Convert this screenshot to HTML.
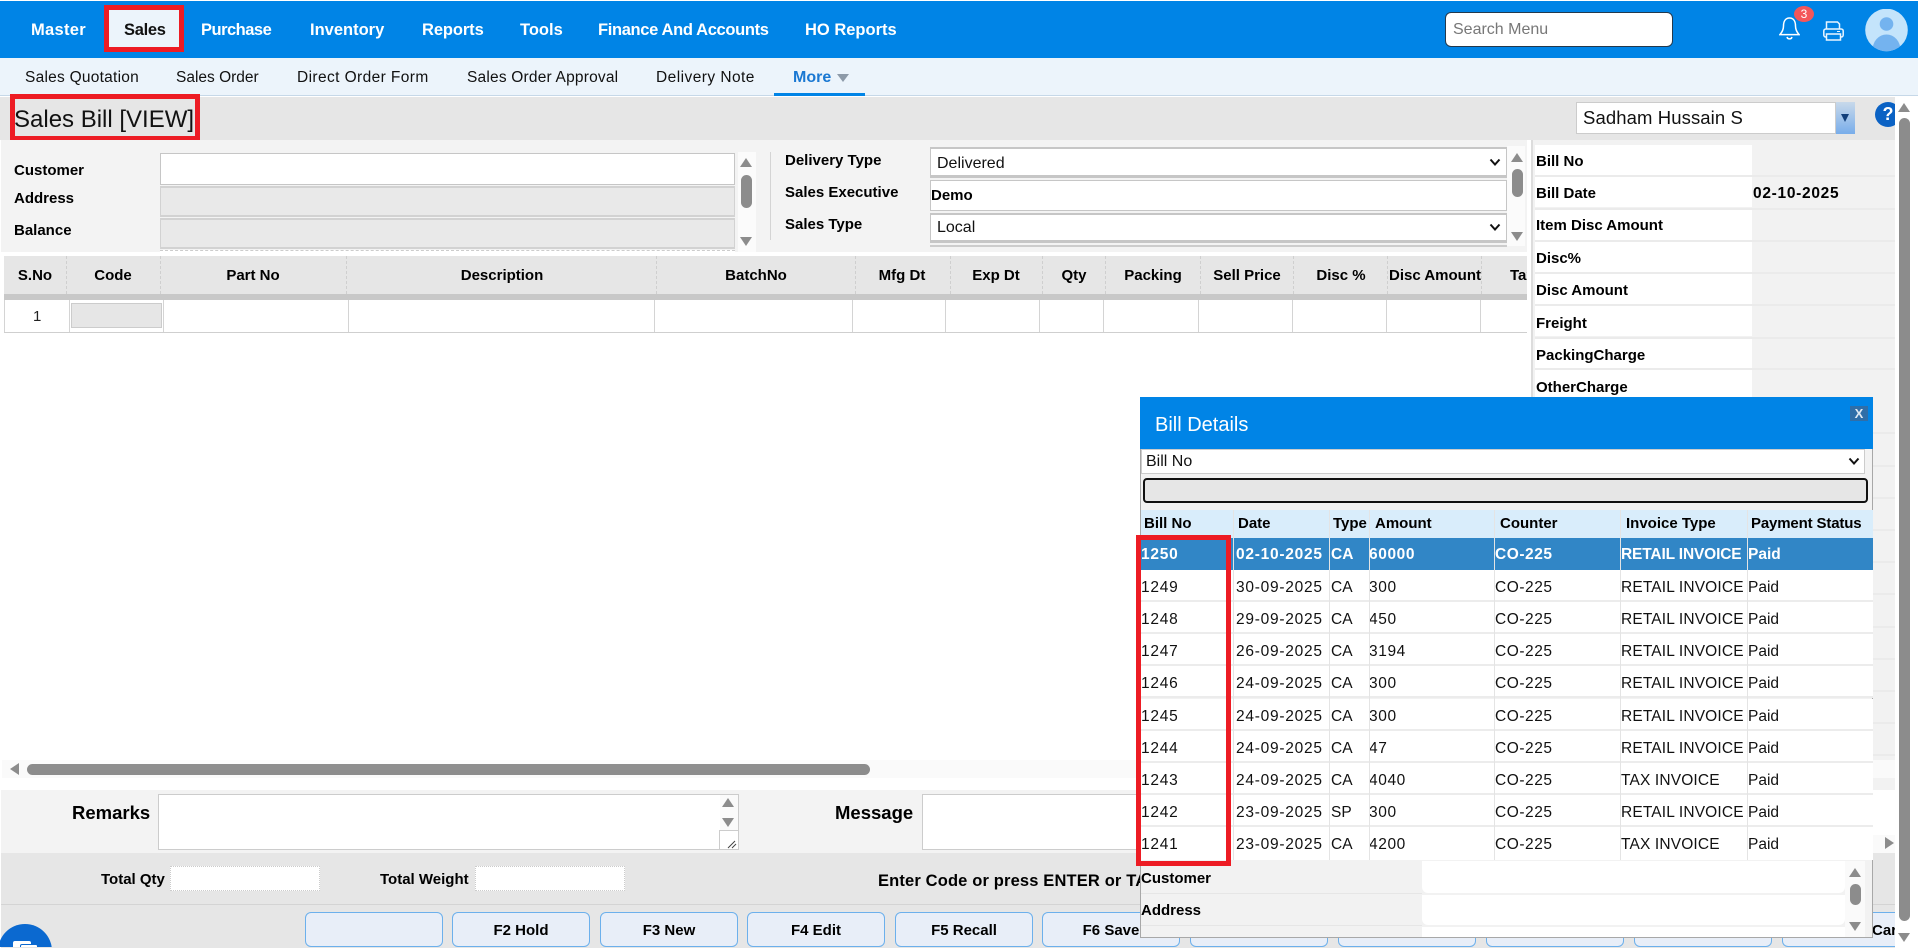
<!DOCTYPE html>
<html><head><meta charset="utf-8"><title>Sales Bill</title>
<style>
html,body{margin:0;padding:0;background:#fff;width:1918px;height:950px;overflow:hidden}
body{position:relative;font-family:"Liberation Sans",Arial,sans-serif;color:#000}
div,span,svg{position:absolute;box-sizing:border-box}
.t{white-space:nowrap;line-height:20px;height:20px}
.b{font-weight:bold;font-size:15px}
.c{text-align:center;transform:translateX(-50%)}
.n{font-weight:bold;font-size:16.5px;color:#fff;top:20px}
.s{font-size:15.5px;top:68px;color:#111}
.u{width:0;height:0;border-left:6.5px solid transparent;border-right:6.5px solid transparent;border-bottom:9px solid #8c8c8c}
.d{width:0;height:0;border-left:6.5px solid transparent;border-right:6.5px solid transparent;border-top:9px solid #8c8c8c}
.th{background:#8c8c8c;border-radius:6px}
.sep{width:0;border-left:1px dashed #cfcfcf;top:256px;height:38px}
.bs{width:1px;background:#d4d4d4;top:300px;height:32px}
.inp{background:#fff;border:1px solid #c6c6c6}
.sel{background:#fff;border:1px solid #c6c6c6;border-top-width:2px;border-bottom-width:2px}
.gr{background:#e9e9e9;border:1px solid #d2d2d2;border-top-width:2px;border-bottom-width:2px}
.rl{left:1535px;width:217px;height:30px;background:#fff}
.rline{left:1535px;width:360px;height:2px;background:#ebebeb}
.btn{top:912px;height:35px;width:138px;background:#e8eef8;border:1px solid #6cb0ec;border-radius:6px;font-weight:bold;font-size:15px;line-height:35px;text-align:center;white-space:nowrap}
.r{left:1141px;width:732px;height:32px;display:block;border-bottom:2px solid #ececec;background:#fff;font-size:15.5px;color:#111}
.r span{top:8px;line-height:20px;white-space:nowrap}
.sl span{top:7px}
.v{width:1px;top:510px;height:350px;background:#e4e4e4}
.a{left:0;letter-spacing:.75px}.x1{left:95px;letter-spacing:.75px}.x2{left:190px}.x3{left:228px;letter-spacing:.6px}.x4{left:354px;letter-spacing:.55px}.x5{left:480px;letter-spacing:.15px}.x6{left:607px}
.sl .x5{letter-spacing:-.15px}
</style></head><body>

<!-- top nav -->
<div style="left:0;top:1px;width:1918px;height:57px;background:#0084e6"></div>
<div style="left:0;top:58px;width:1918px;height:37px;background:#ecf4fb"></div>
<div style="left:0;top:95px;width:1918px;height:1px;background:#c6d8e8"></div>
<div style="left:104px;top:5px;width:80px;height:47px;border:5px solid #ed1c24;background:#ecf4fb"></div>
<span class="t n" style="left:31px;letter-spacing:.3px">Master</span>
<span class="t n" style="left:124px;color:#111;letter-spacing:-.3px">Sales</span>
<span class="t n" style="left:201px;letter-spacing:-.5px">Purchase</span>
<span class="t n" style="left:310px">Inventory</span>
<span class="t n" style="left:422px;letter-spacing:-.1px">Reports</span>
<span class="t n" style="left:520px">Tools</span>
<span class="t n" style="left:598px;letter-spacing:-.35px">Finance And Accounts</span>
<span class="t n" style="left:805px">HO Reports</span>

<span class="t s" style="left:25px;letter-spacing:.25px">Sales Quotation</span>
<span class="t s" style="left:176px">Sales Order</span>
<span class="t s" style="left:297px;letter-spacing:.4px">Direct Order Form</span>
<span class="t s" style="left:467px;letter-spacing:.2px">Sales Order Approval</span>
<span class="t s" style="left:656px;letter-spacing:.45px">Delivery Note</span>
<span class="t" style="left:793px;top:68px;font-size:16px;font-weight:bold;color:#1a78d2">More</span>
<div style="left:837px;top:74px;width:0;height:0;border-left:6.5px solid transparent;border-right:6.5px solid transparent;border-top:8px solid #8d9aa8"></div>
<div style="left:774px;top:93px;width:91px;height:3px;background:#0084e6"></div>

<div style="left:1445px;top:12px;width:228px;height:35px;background:#fff;border:1px solid #23394d;border-radius:6px"></div>
<span class="t" style="left:1453px;top:20px;font-size:16px;color:#777">Search Menu</span>

<svg style="left:1779px;top:17px" width="21" height="24" viewBox="0 0 21 24" fill="none" stroke="#fff" stroke-width="1.5"><path d="M10.5 1C6 1 4.5 5 4.5 9c0 4-1.5 6.3-3.6 8.6h19.2C18 15.3 16.5 13 16.5 9c0-4-1.5-8-6-8z"/><path d="M8 18a2.6 2.6 0 0 0 5 0" transform="translate(0 2)"/></svg>
<div style="left:1794px;top:6px;width:20px;height:16px;background:#f4565a;border-radius:50%"></div>
<span class="t" style="left:1794px;top:4px;width:20px;text-align:center;font-size:12px;color:#fff">3</span>
<svg style="left:1823px;top:21px" width="21" height="20" viewBox="0 0 21 20" fill="none" stroke="#eaf5ff" stroke-width="1.5"><path d="M3.5 8V1h11l2 2v5"/><rect x=".8" y="8" width="19.4" height="8" rx="2"/><rect x="3.5" y="13" width="14" height="6" fill="#0084e6"/><path d="M14 10.5h3" stroke-width="1"/></svg>
<svg style="left:1865px;top:9px" width="43" height="43" viewBox="0 0 43 43"><circle cx="21.5" cy="21" r="21.3" fill="#c4e4fb"/><circle cx="21.5" cy="15" r="6.8" fill="#74b3ef"/><clipPath id="cl"><circle cx="21.5" cy="21" r="21.3"/></clipPath><ellipse cx="21.5" cy="41" rx="14" ry="15.5" fill="#74b3ef" clip-path="url(#cl)"/></svg>

<!-- title bar -->
<div style="left:0;top:97px;width:1895px;height:43px;background:#e6e6e6"></div>
<div style="left:10px;top:94px;width:190px;height:47px;border:5px solid #ed1c24"></div>
<span class="t" style="left:14px;top:105px;height:30px;line-height:30px;font-size:24px;color:#111">Sales Bill [VIEW]</span>
<div style="left:1576px;top:102px;width:260px;height:32px;background:#fff;border:1px solid #ccc"></div>
<span class="t" style="left:1583px;top:106px;height:24px;line-height:24px;font-size:18.5px;color:#111;letter-spacing:.1px">Sadham Hussain S</span>
<div style="left:1836px;top:102px;width:19px;height:32px;background:linear-gradient(#c8d9ea,#78adea)"></div>
<div style="left:1841px;top:114px;width:0;height:0;border-left:4.5px solid transparent;border-right:4.5px solid transparent;border-top:8px solid #123f7a"></div>
<div style="left:1875px;top:102px;width:20px;height:25px;overflow:hidden"><div style="left:0;top:0;width:26px;height:25px;border-radius:50%;background:#0b62c4;color:#fff;font-weight:bold;font-size:18px;line-height:25px;text-align:center">?</div></div>

<!-- form area -->
<div style="left:1px;top:140px;width:1526px;height:112px;background:#f3f3f3"></div>
<span class="t b" style="left:14px;top:161px">Customer</span>
<span class="t b" style="left:14px;top:189px">Address</span>
<span class="t b" style="left:14px;top:221px">Balance</span>
<div class="inp" style="left:160px;top:153px;width:575px;height:32px"></div>
<div class="gr" style="left:160px;top:186px;width:575px;height:31px"></div>
<div class="gr" style="left:160px;top:218px;width:575px;height:31px"></div>
<div style="left:160px;top:250px;width:575px;height:2px;background:#fff;border-top:1px dashed #ccc"></div>
<div style="left:738px;top:152px;width:18px;height:100px;background:#fbfbfb"></div>
<div class="u" style="left:740px;top:158px"></div>
<div class="th" style="left:741px;top:175px;width:11px;height:33px"></div>
<div class="d" style="left:740px;top:237px"></div>
<div style="left:770px;top:152px;width:1px;height:88px;background:#d4d4d4"></div>

<span class="t b" style="left:785px;top:151px">Delivery Type</span>
<span class="t b" style="left:785px;top:183px">Sales Executive</span>
<span class="t b" style="left:785px;top:215px">Sales Type</span>
<div class="sel" style="left:930px;top:147px;width:577px;height:31px;border-bottom-width:3px"></div>
<span class="t" style="left:937px;top:154px;font-size:16px;color:#111">Delivered</span>
<svg style="left:1489px;top:158px" width="12" height="9" viewBox="0 0 12 9" fill="none" stroke="#111" stroke-width="2"><path d="M1.5 1.5 6 6.5l4.500-5"/></svg>
<div class="inp" style="left:930px;top:180px;width:577px;height:31px"></div>
<span class="t b" style="left:931px;top:186px">Demo</span>
<div class="sel" style="left:930px;top:213px;width:577px;height:30px;border-bottom-width:3px"></div>
<span class="t" style="left:937px;top:218px;font-size:16px;color:#111">Local</span>
<svg style="left:1489px;top:223px" width="12" height="9" viewBox="0 0 12 9" fill="none" stroke="#111" stroke-width="2"><path d="M1.5 1.5 6 6.5l4.500-5"/></svg>
<div style="left:930px;top:245px;width:577px;height:2px;background:#ccc"></div>
<div style="left:1507px;top:146px;width:18px;height:100px;background:#fbfbfb"></div>
<div class="u" style="left:1511px;top:153px"></div>
<div class="th" style="left:1512px;top:169px;width:11px;height:28px"></div>
<div class="d" style="left:1511px;top:232px"></div>

<!-- right panel -->
<div style="left:1531px;top:140px;width:364px;height:650px;background:#f2f2f2;border-left:2px solid #dcdcdc"></div>
<div class="rl" style="top:145px"></div><div class="rl" style="top:177px"></div><div class="rl" style="top:209px;height:31px"></div><div class="rl" style="top:242px"></div><div class="rl" style="top:274px"></div><div class="rl" style="top:306px"></div><div class="rl" style="top:338px"></div><div class="rl" style="top:370px;height:28px"></div>
<div class="rline" style="top:175px"></div><div class="rline" style="top:208px"></div><div class="rline" style="top:240px"></div><div class="rline" style="top:272px"></div><div class="rline" style="top:304px"></div><div class="rline" style="top:337px"></div><div class="rline" style="top:368px"></div>
<div class="rline" style="top:432px"></div><div class="rline" style="top:465px"></div><div class="rline" style="top:497px"></div><div class="rline" style="top:529px"></div><div class="rline" style="top:561px"></div><div class="rline" style="top:593px"></div><div class="rline" style="top:626px"></div><div class="rline" style="top:658px"></div><div class="rline" style="top:690px"></div><div class="rline" style="top:722px"></div><div class="rline" style="top:754px"></div>
<span class="t b" style="left:1536px;top:152px">Bill No</span>
<span class="t b" style="left:1536px;top:184px">Bill Date</span>
<span class="t b" style="left:1753px;top:184px;letter-spacing:.7px;font-size:15.500px">02-10-2025</span>
<span class="t b" style="left:1536px;top:216px">Item Disc Amount</span>
<span class="t b" style="left:1536px;top:249px">Disc%</span>
<span class="t b" style="left:1536px;top:281px">Disc Amount</span>
<span class="t b" style="left:1536px;top:314px">Freight</span>
<span class="t b" style="left:1536px;top:346px">PackingCharge</span>
<span class="t b" style="left:1536px;top:378px">OtherCharge</span>

<!-- main scrollbar -->
<div class="u" style="left:1898px;top:103px"></div>
<div class="th" style="left:1899px;top:118px;width:11px;height:803px"></div>
<div class="d" style="left:1898px;top:933px"></div>

<!-- grid -->
<div style="left:4px;top:256px;width:1523px;height:38px;background:#e6e6e6"></div>
<div style="left:4px;top:294px;width:1523px;height:6px;background:#c8c8c8"></div>
<div class="sep" style="left:66px"></div><div class="sep" style="left:160px"></div><div class="sep" style="left:346px"></div><div class="sep" style="left:656px"></div><div class="sep" style="left:855px"></div><div class="sep" style="left:950px"></div><div class="sep" style="left:1042px"></div><div class="sep" style="left:1105px"></div><div class="sep" style="left:1200px"></div><div class="sep" style="left:1293px"></div><div class="sep" style="left:1387px"></div><div class="sep" style="left:1481px"></div>
<span class="t b c" style="left:35px;top:266px">S.No</span>
<span class="t b c" style="left:113px;top:266px">Code</span>
<span class="t b c" style="left:253px;top:266px">Part No</span>
<span class="t b c" style="left:502px;top:266px">Description</span>
<span class="t b c" style="left:756px;top:266px">BatchNo</span>
<span class="t b c" style="left:902px;top:266px">Mfg Dt</span>
<span class="t b c" style="left:996px;top:266px">Exp Dt</span>
<span class="t b c" style="left:1074px;top:266px">Qty</span>
<span class="t b c" style="left:1153px;top:266px">Packing</span>
<span class="t b c" style="left:1247px;top:266px">Sell Price</span>
<span class="t b c" style="left:1341px;top:266px">Disc %</span>
<span class="t b c" style="left:1435px;top:266px">Disc Amount</span>
<div style="left:1510px;top:266px;width:17px;height:20px;overflow:hidden"><span class="t b" style="left:0;top:0">Tax</span></div>
<div style="left:4px;top:332px;width:1523px;height:1px;background:#cfcfcf"></div>
<div class="bs" style="left:4px"></div><div class="bs" style="left:69px"></div><div class="bs" style="left:163px"></div><div class="bs" style="left:348px"></div><div class="bs" style="left:654px"></div><div class="bs" style="left:852px"></div><div class="bs" style="left:945px"></div><div class="bs" style="left:1039px"></div><div class="bs" style="left:1103px"></div><div class="bs" style="left:1198px"></div><div class="bs" style="left:1292px"></div><div class="bs" style="left:1386px"></div><div class="bs" style="left:1480px"></div>
<span class="t" style="left:33px;top:307px;font-size:15px;color:#222">1</span>
<div style="left:71px;top:303px;width:91px;height:25px;background:#e6e6e6;border:1px solid #ccc"></div>

<!-- h scrollbar -->
<div style="left:2px;top:760px;width:1893px;height:18px;background:#fafafa"></div>
<div style="left:10px;top:763px;width:0;height:0;border-top:6.5px solid transparent;border-bottom:6.5px solid transparent;border-right:9px solid #8c8c8c"></div>
<div class="th" style="left:27px;top:764px;width:843px;height:11px"></div>
<div style="left:1873px;top:835px;width:22px;height:18px;background:#fafafa"></div>
<div style="left:1885px;top:837px;width:0;height:0;border-top:6.5px solid transparent;border-bottom:6.5px solid transparent;border-left:9px solid #8c8c8c"></div>

<!-- bottom -->
<div style="left:1px;top:790px;width:1894px;height:63px;background:#f3f3f3"></div>
<div style="left:1873px;top:835px;width:22px;height:18px;background:#fafafa"></div>
<div style="left:1885px;top:837px;width:0;height:0;border-top:6.5px solid transparent;border-bottom:6.5px solid transparent;border-left:9px solid #8c8c8c"></div>
<div style="left:1873px;top:790px;width:22px;height:45px;background:#fff"></div>
<div style="left:1px;top:853px;width:1894px;height:95px;background:#e6e6e6"></div>
<div style="left:1px;top:904px;width:1894px;height:1px;background:#d4d4d4"></div>
<span class="t" style="left:72px;top:803px;font-size:18.5px;font-weight:bold">Remarks</span>
<div style="left:158px;top:794px;width:581px;height:56px;background:#fff;border:1px solid #ccc"></div>
<div style="left:720px;top:795px;width:18px;height:36px;background:#fafafa"></div>
<div class="u" style="left:722px;top:798px;border-left-width:6px;border-right-width:6px"></div>
<div class="d" style="left:722px;top:818px;border-left-width:6px;border-right-width:6px"></div>
<div style="left:719px;top:830px;width:20px;height:20px;background:#fff;border:1px solid #ccc"></div>
<svg style="left:727px;top:839px" width="10" height="10" viewBox="0 0 10 10" stroke="#444" stroke-width="1" fill="none"><path d="M1 9 8 2M5 9 9 5"/></svg>
<span class="t" style="left:835px;top:803px;font-size:18.5px;font-weight:bold">Message</span>
<div style="left:922px;top:794px;width:300px;height:56px;background:#fff;border:1px solid #ccc"></div>
<span class="t b" style="left:101px;top:870px">Total Qty</span>
<div style="left:170px;top:866px;width:150px;height:25px;background:#fff;border:1px dotted #ccc"></div>
<span class="t b" style="left:380px;top:870px">Total Weight</span>
<div style="left:475px;top:866px;width:150px;height:25px;background:#fff;border:1px dotted #ccc"></div>
<span class="t" style="left:878px;top:871px;font-size:16.500px;font-weight:bold;letter-spacing:.15px">Enter Code or press ENTER or TAB</span>

<div class="btn" style="left:305px"></div>
<div class="btn" style="left:452px">F2 Hold</div>
<div class="btn" style="left:600px">F3 New</div>
<div class="btn" style="left:747px">F4 Edit</div>
<div class="btn" style="left:895px">F5 Recall</div>
<div class="btn" style="left:1042px">F6 Save</div>
<div class="btn" style="left:1190px"></div>
<div class="btn" style="left:1338px"></div>
<div class="btn" style="left:1486px"></div>
<div class="btn" style="left:1634px"></div>
<div class="btn" style="left:1782px;width:113px;border-right:0;border-radius:6px 0 0 6px;overflow:hidden"><span class="t" style="left:43px;top:8px">Pay</span><span class="t" style="left:89px;top:8px">Card</span></div>

<!-- chat bubble -->
<div style="left:0;top:900px;width:60px;height:47px;overflow:hidden"><div style="left:-2px;top:24px;width:54px;height:54px;border-radius:50%;background:#0b69d0"></div><div style="left:13px;top:41px;width:18px;height:10px;background:#fff;border-radius:2px"></div><div style="left:20px;top:44px;width:18px;height:8px;background:#fff;border:1px solid #0b69d0;border-radius:2px"></div></div>

<!-- popup -->
<div style="left:1140px;top:397px;width:733px;height:541px;background:#f2f2f2;border:1px solid #a8a8a8;border-top:0"></div>
<div style="left:1140px;top:397px;width:733px;height:52px;background:#0084e6"></div>
<span class="t" style="left:1155px;top:413px;height:24px;line-height:24px;font-size:20px;color:#fff">Bill Details</span>
<div style="left:1850px;top:406px;width:18px;height:15px;background:#2f6ea8;color:#dfe9f3;font-size:13px;font-weight:bold;line-height:15px;text-align:center">X</div>
<div style="left:1141px;top:449px;width:724px;height:25px;background:#fff;border:1px solid #ccc"></div>
<span class="t" style="left:1146px;top:452px;font-size:16px;color:#111">Bill No</span>
<svg style="left:1848px;top:457px" width="12" height="9" viewBox="0 0 12 9" fill="none" stroke="#111" stroke-width="2"><path d="M1.500 1.500 6 6.500l4.500-5"/></svg>
<div style="left:1143px;top:478px;width:725px;height:25px;background:#e6e6e6;border:2px solid #111;border-radius:4px"></div>
<div style="left:1141px;top:510px;width:732px;height:28px;background:#d9edfb"></div>
<span class="t b" style="left:1144px;top:514px">Bill No</span>
<span class="t b" style="left:1238px;top:514px">Date</span>
<span class="t b" style="left:1333px;top:514px">Type</span>
<span class="t b" style="left:1375px;top:514px">Amount</span>
<span class="t b" style="left:1500px;top:514px">Counter</span>
<span class="t b" style="left:1626px;top:514px">Invoice Type</span>
<span class="t b" style="left:1751px;top:514px;letter-spacing:-.15px">Payment Status</span>

<div class="r sl" style="top:538px;background:#3186c6;color:#fff;font-weight:bold;border-bottom:0"><span class="a">1250</span><span class="x1">02-10-2025</span><span class="x2">CA</span><span class="x3">60000</span><span class="x4">CO-225</span><span class="x5">RETAIL INVOICE</span><span class="x6">Paid</span></div>
<div class="r" style="top:570px"><span class="a">1249</span><span class="x1">30-09-2025</span><span class="x2">CA</span><span class="x3">300</span><span class="x4">CO-225</span><span class="x5">RETAIL INVOICE</span><span class="x6">Paid</span></div>
<div class="r" style="top:602px"><span class="a">1248</span><span class="x1">29-09-2025</span><span class="x2">CA</span><span class="x3">450</span><span class="x4">CO-225</span><span class="x5">RETAIL INVOICE</span><span class="x6">Paid</span></div>
<div class="r" style="top:634px"><span class="a">1247</span><span class="x1">26-09-2025</span><span class="x2">CA</span><span class="x3">3194</span><span class="x4">CO-225</span><span class="x5">RETAIL INVOICE</span><span class="x6">Paid</span></div>
<div class="r" style="top:666px"><span class="a">1246</span><span class="x1">24-09-2025</span><span class="x2">CA</span><span class="x3">300</span><span class="x4">CO-225</span><span class="x5">RETAIL INVOICE</span><span class="x6">Paid</span></div>
<div class="r" style="top:699px"><span class="a">1245</span><span class="x1">24-09-2025</span><span class="x2">CA</span><span class="x3">300</span><span class="x4">CO-225</span><span class="x5">RETAIL INVOICE</span><span class="x6">Paid</span></div>
<div class="r" style="top:731px"><span class="a">1244</span><span class="x1">24-09-2025</span><span class="x2">CA</span><span class="x3">47</span><span class="x4">CO-225</span><span class="x5">RETAIL INVOICE</span><span class="x6">Paid</span></div>
<div class="r" style="top:763px"><span class="a">1243</span><span class="x1">24-09-2025</span><span class="x2">CA</span><span class="x3">4040</span><span class="x4">CO-225</span><span class="x5">TAX INVOICE</span><span class="x6">Paid</span></div>
<div class="r" style="top:795px"><span class="a">1242</span><span class="x1">23-09-2025</span><span class="x2">SP</span><span class="x3">300</span><span class="x4">CO-225</span><span class="x5">RETAIL INVOICE</span><span class="x6">Paid</span></div>
<div class="r" style="top:827px;height:33px;border-bottom:0"><span class="a">1241</span><span class="x1">23-09-2025</span><span class="x2">CA</span><span class="x3">4200</span><span class="x4">CO-225</span><span class="x5">TAX INVOICE</span><span class="x6">Paid</span></div>
<div class="v" style="left:1233px"></div><div class="v" style="left:1329px"></div><div class="v" style="left:1369px"></div><div class="v" style="left:1494px"></div><div class="v" style="left:1620px"></div><div class="v" style="left:1747px"></div>

<div style="left:1422px;top:861px;width:423px;height:32px;background:#fff;border-radius:0 0 6px 6px"></div>
<div style="left:1422px;top:895px;width:423px;height:30px;background:#fff;border-radius:0 0 6px 6px"></div>
<div style="left:1422px;top:927px;width:423px;height:10px;background:#fff"></div>
<div style="left:1141px;top:893px;width:281px;height:1px;background:#e6e6e6"></div>
<div style="left:1141px;top:925px;width:281px;height:1px;background:#e6e6e6"></div>
<span class="t b" style="left:1141px;top:869px">Customer</span>
<span class="t b" style="left:1141px;top:901px">Address</span>
<div style="left:1845px;top:861px;width:20px;height:76px;background:#fafafa"></div>
<div class="u" style="left:1849px;top:868px"></div>
<div class="th" style="left:1850px;top:884px;width:11px;height:21px"></div>
<div class="d" style="left:1849px;top:922px"></div>

<!-- popup red highlight -->
<div style="left:1136px;top:535px;width:95px;height:331px;border:5px solid #ed1c24"></div>
</body></html>
